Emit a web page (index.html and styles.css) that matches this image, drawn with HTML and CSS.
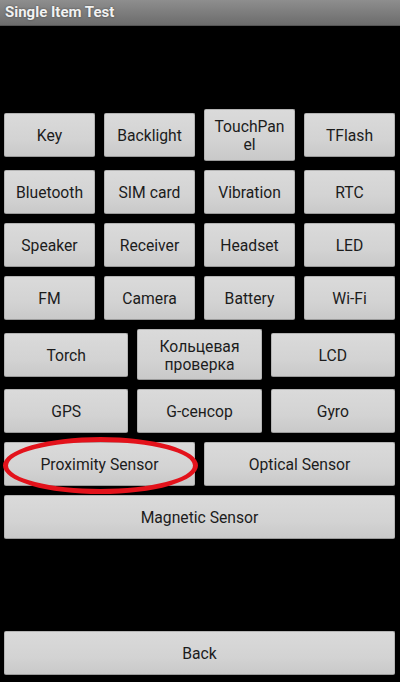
FILE: index.html
```html
<!DOCTYPE html>
<html>
<head>
<meta charset="utf-8">
<link rel="stylesheet" href="styles.css">
</head>
<body>
<div class="screen">
  <div class="titlebar">Single Item Test</div>
  <div class="grid">
    <div class="row row-tall">
      <div class="btn">Key</div>
      <div class="btn">Backlight</div>
      <div class="btn btn-tall">TouchPan<br>el</div>
      <div class="btn">TFlash</div>
    </div>
    <div class="row">
      <div class="btn">Bluetooth</div>
      <div class="btn">SIM card</div>
      <div class="btn">Vibration</div>
      <div class="btn">RTC</div>
    </div>
    <div class="row">
      <div class="btn">Speaker</div>
      <div class="btn">Receiver</div>
      <div class="btn">Headset</div>
      <div class="btn">LED</div>
    </div>
    <div class="row">
      <div class="btn">FM</div>
      <div class="btn">Camera</div>
      <div class="btn">Battery</div>
      <div class="btn">Wi-Fi</div>
    </div>
    <div class="row row-tall2">
      <div class="btn">Torch</div>
      <div class="btn btn-tall2">Кольцевая<br>проверка</div>
      <div class="btn">LCD</div>
    </div>
    <div class="row">
      <div class="btn">GPS</div>
      <div class="btn">G-сенсор</div>
      <div class="btn">Gyro</div>
    </div>
    <div class="row">
      <div class="btn btn-mark">Proximity Sensor<span class="ellipse"></span></div>
      <div class="btn">Optical Sensor</div>
    </div>
    <div class="row">
      <div class="btn">Magnetic Sensor</div>
    </div>
  </div>
  <div class="bottom">
    <div class="btn">Back</div>
  </div>
</div>
</body>
</html>
```

FILE: styles.css
```css
html, body {
  margin: 0;
  padding: 0;
  background: #000;
}
.screen {
  width: 400px;
  height: 682px;
  display: flex;
  flex-direction: column;
  background: #000;
  font-family: Roboto, "Liberation Sans", sans-serif;
}
.titlebar {
  height: 26px;
  box-sizing: border-box;
  background: linear-gradient(#8e8e8e, #6c6c6c);
  border-bottom: 1px solid #555;
  color: #f2f2f2;
  font-weight: bold;
  font-size: 15px;
  line-height: 25px;
  padding-left: 5px;
  text-shadow: 0 0 2px rgba(0,0,0,0.5);
}
.grid {
  display: flex;
  flex-direction: column;
  gap: 9px;
  padding: 83px 5px 0 4px;
}
.row {
  display: flex;
  gap: 9px;
  align-items: center;
  height: 44px;
}
.row-tall { height: 52px; }
.row-tall2 { height: 51px; }
.btn {
  flex: 1 1 0;
  height: 44px;
  box-sizing: border-box;
  display: flex;
  align-items: center;
  justify-content: center;
  text-align: center;
  padding-top: 2px;
  background: linear-gradient(#dadada, #d3d3d3 60%, #c9c9c9);
  border: 1px solid #b4b4b4;
  border-bottom-color: #9a9a9a;
  border-radius: 2px;
  color: #1c1c1c;
  font-size: 15.7px;
  line-height: 18px;
}
.btn-tall { height: 52px; }
.btn-tall2 { height: 51px; }
.btn-mark {
  position: relative;
}
.ellipse {
  position: absolute;
  left: -2px;
  top: -6px;
  width: 195px;
  height: 57px;
  box-sizing: border-box;
  border: 5px solid #e3121b;
  border-radius: 50%;
}
.bottom {
  margin-top: auto;
  display: flex;
  padding: 0 5px 7px 4px;
}
```
